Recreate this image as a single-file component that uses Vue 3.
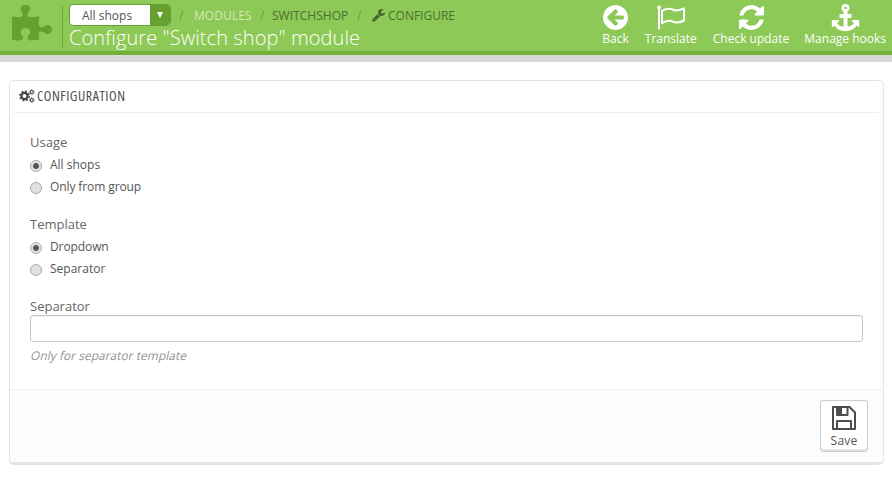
<script setup>
import { ref } from 'vue'

const usage = ref('all')
const template = ref('dropdown')
const separator = ref('')
const groups = [
  { label: 'Usage', name: 'usage', model: usage, options: [['all', 'All shops'], ['group', 'Only from group']] },
  { label: 'Template', name: 'template', model: template, options: [['dropdown', 'Dropdown'], ['separator', 'Separator']] }
]
</script>

<template>
  <div class="page">
    <header class="header">
      <svg class="puzzle" viewBox="128 0 1664 1664" preserveAspectRatio="none"><path d="M1755 1083q0 81-44.5 135t-123.5 54q-41 0-77.5-17.5t-59-38-56.5-38-71-17.5q-110 0-110 124 0 39 16 115t15 115v5q-22 0-33 1-34 3-97.5 11.5t-115.5 13.5-98 5q-61 0-103-26.5t-42-83.5q0-37 17.5-71t38-56.5 38-59 17.5-77.5q0-79-54-123.5t-135-44.5q-84 0-143 45.5t-59 127.5q0 43 15 83t33.5 64.5 33.5 53 15 50.5q0 45-46 89-37 35-117 35-95 0-245-24-9-2-27.5-4t-27.5-4l-13-2q-1 0-3-1-2 0-2-1v-1024q2 1 17.5 3.5t34 5 21.5 3.5q150 24 245 24 80 0 117-35 46-44 46-89 0-22-15-50.5t-33.5-53-33.5-64.5-15-83q0-82 59-127.5t144-45.5q80 0 134 44.5t54 123.5q0 41-17.5 77.5t-38 59-38 56.5-17.5 71q0 57 42 83.5t103 26.5q64 0 180-15t163-17v2q-1 2-3.5 17.5t-5 34-3.5 21.5q-24 150-24 245 0 80 35 117 44 46 89 46 22 0 50.5-15t53-33.5 64.5-33.5 83-15q82 0 127.5 59t45.5 143z" /></svg>
      <div class="heading">
        <nav class="crumbs">
          <button class="shop"><span class="shop-name">All shops</span><span class="caret"><svg viewBox="0 0 6 6"><path d="M0 0h6L3 6z" /></svg></span></button>
          <span class="slash s1">/</span>
          <span class="crumb muted">MODULES</span>
          <span class="slash s2">/</span>
          <span class="crumb c2">SWITCHSHOP</span>
          <span class="slash s3">/</span>
          <svg class="wrench" viewBox="64 128 1664 1664"><path d="M448 1472q0-26-19-45t-45-19-45 19-19 45 19 45 45 19 45-19 19-45zm644-420l-682 682q-37 37-90 37-52 0-91-37l-106-108q-38-36-38-90 0-53 38-91l681-681q39 98 114.5 173.5t173.5 114.5zm634-435q0 39-23 106-47 134-164.5 217.5t-258.5 83.5q-185 0-316.5-131.5t-131.5-316.5 131.5-316.5 316.5-131.5q58 0 121.5 16.5t107.5 46.5q16 11 16 28t-16 28l-293 169v224l193 107q5-3 79-48.5t135.5-81 70.5-35.5q15 0 23.5 10t8.5 25z" /></svg>
          <span class="crumb c3">CONFIGURE</span>
        </nav>
        <h1>Configure "Switch shop" module</h1>
      </div>
      <div class="tools">
        <a class="tool"><svg viewBox="128 128 1536 1536"><path d="M1408 960v-128q0-26-19-45t-45-19h-502l189-189q19-19 19-45t-19-45l-91-91q-18-18-45-18t-45 18l-362 362-91 91q-18 18-18 45t18 45l91 91 362 362q18 18 45 18t45-18l91-91q18-18 18-45t-18-45l-189-189h502q26 0 45-19t19-45zm256-64q0 209-103 385.5t-279.5 279.5-385.5 103-385.5-103-279.5-279.5-103-385.5 103-385.5 279.5-279.5 385.5-103 385.5 103 279.5 279.5 103 385.5z" /></svg><span>Back</span></a>
        <a class="tool"><svg class="flag" viewBox="0 0 28 24"><circle cx="2" cy="2" r="2" /><path d="M1 2h2v21.2q0 .8-1 .8t-1-.8z" /><path class="line" d="M5 5.3C9.5 2.6 13 2.5 17 4.5C20 6 23 4.5 27 2.8V15C22 17.6 19.5 18 16 16.2C12.5 14.4 9 15.4 5 17.7Z" /></svg><span>Translate</span></a>
        <a class="tool"><svg viewBox="128 128 1536 1536"><path d="M1639 1056q0 5-1 7-64 268-268 434.5t-478 166.5q-146 0-282.500-55t-243.500-157l-129 129q-19 19-45 19t-45-19-19-45v-448q0-26 19-45t45-19h448q26 0 45 19t19 45-19 45l-137 137q71 66 161 102t187 36q134 0 250-65t186-179q11-17 53-117 8-23 30-23h192q13 0 22.500 9.500t9.500 22.500zm25-800v448q0 26-19 45t-45 19h-448q-26 0-45-19t-19-45 19-45l138-138q-148-137-349-137-134 0-250 65t-186 179q-11 17-53 117-8 23-30 23h-199q-13 0-22.500-9.500t-9.500-22.500v-7q65-268 270-434.500t480-166.500q146 0 284 55.500t245 156.500l130-129q19-19 45-19t45 19 19 45z" /></svg><span>Check update</span></a>
        <a class="tool last"><svg class="anchor" viewBox="0 0 28 27"><path fill-rule="evenodd" d="M14 0a4 4 0 0 1 2 7.500V10h4v4h-4v8.800c3-.5 5.200-1.800 6.400-3.600l-2.100-2.100c-.4-.4-.1-1 .5-1h6.100c.5 0 .8.300.8.700v5.600c0 .7-.6.900-1 .5l-1.500-1.500C22.700 25.300 18.700 27 14 27S5.300 25.300 2.800 21.400l-1.500 1.500c-.4.4-1 .2-1-.5v-5.600c0-.4.3-.7.8-.7h6.100c.6 0 .9.600.5 1l-2.100 2.100C6.800 21 9 22.300 12 22.800V14H8v-4h4V7.500A4 4 0 0 1 14 0zm0 2.700a1.300 1.300 0 1 0 0 2.600 1.300 1.300 0 0 0 0-2.600z" /></svg><span>Manage hooks</span></a>
      </div>
    </header>
    <div class="strip"></div>
    <main class="panel">
      <h2>
        <svg class="cogs" viewBox="0 0 16 14"><g fill="none" stroke="#444"><circle cx="5.500" cy="7" r="3.100" stroke-width="2.200" /><circle cx="5.500" cy="7" r="4.700" stroke-width="1.500" stroke-dasharray="1.850 1.841" /><circle cx="12.800" cy="3" r="1.500" stroke-width="1.100" /><circle cx="12.800" cy="3" r="2.400" stroke-width=".8" stroke-dasharray=".94 .945" /><circle cx="12.800" cy="11" r="1.500" stroke-width="1.100" /><circle cx="12.800" cy="11" r="2.400" stroke-width=".8" stroke-dasharray=".94 .945" /></g></svg>
        <span class="title">CONFIGURATION</span>
      </h2>
      <form class="form" @submit.prevent>
        <div v-for="g in groups" :key="g.name" class="group">
          <div class="label">{{ g.label }}</div>
          <label v-for="[value, text] in g.options" :key="value" class="radio">
            <input v-model="g.model.value" type="radio" :name="g.name" :value="value" />
            <span :class="value">{{ text }}</span>
          </label>
        </div>
        <label class="label" for="separator">Separator</label>
        <input id="separator" v-model="separator" class="field" type="text" />
        <p class="help">Only for separator template</p>
      </form>
      <footer>
        <button class="save">
          <svg viewBox="0 0 24 24"><path fill="none" stroke="#4d4d4d" stroke-width="2" stroke-linejoin="round" d="M1 1h16.500L23 6.500V23H1zM5 23v-8h14v8M5 1v8h10.500V1" /><path fill="#4d4d4d" d="M5 1h5v8H5z" /></svg>
          <span>Save</span>
        </button>
      </footer>
    </main>
  </div>
</template>

<style>
body { background: #fff; }
</style>

<style scoped>
* { box-sizing: border-box; }
.page { height: 481px; overflow: hidden; font-family: "Open Sans", sans-serif; font-size: 12px; color: #555; }
button { font: inherit; color: inherit; padding: 0; }
.header { height: 55px; display: flex; align-items: flex-start; background: #8dc956; border-bottom: 4px solid #72b236; }
.puzzle { width: 41px; height: 38px; margin: 5px 0 0 12px; flex: none; fill: #66a031; }
.heading { margin: 6px 0 0 9px; padding-left: 6px; border-left: 1px solid #6da637; height: 42px; flex: 1; white-space: nowrap; }
.crumbs { display: flex; align-items: center; height: 20px; margin-top: -1px; font-size: 12px; line-height: 20px; color: #4a7030; }
.shop { display: flex; width: 102px; height: 22px; flex: none; border: 1px solid #66a031; border-radius: 4px; overflow: hidden; background: #fff; }
.shop-name { flex: 1; text-align: left; padding-left: 12px; line-height: 21px; color: #555; }
.caret { width: 20px; background: #66a031; display: flex; align-items: center; justify-content: center; }
.caret svg { width: 6px; height: 6px; fill: #fff; }
.slash { color: #68964a; flex: none; width: 6px; position: relative; top: 1px; }
.s1 { margin-left: 8px; }
.crumb { position: relative; top: 1px; }
.muted { color: #d0e8b8; margin-left: 9px; width: 58px; letter-spacing: .08px; }
.s2 { margin-left: 8px; }
.c2 { margin-left: 6px; width: 78px; letter-spacing: .03px; }
.s3 { margin-left: 7px; }
.wrench { width: 13px; height: 13px; fill: #41642a; margin-left: 9px; flex: none; }
.c3 { margin-left: 3px; }
h1 { margin: 1px 0 0; font-size: 20px; line-height: 24px; font-weight: 300; letter-spacing: .09px; color: #fff; }
.tools { display: flex; gap: 16px; padding: 5px 6px 0 0; color: #fff; flex: none; }
.tool { display: flex; flex-direction: column; align-items: center; line-height: 16px; white-space: nowrap; }
.last { margin-left: -1px; }
.tool span { margin-top: 1px; }
.tool svg { width: 25px; height: 25px; fill: #fff; }
.tool .flag { width: 28px; }
.tool .flag .line { fill: none; stroke: #fff; stroke-width: 2; stroke-linejoin: round; }
.tool .anchor { width: 29px; height: 27px; margin: -1px 0; }
.strip { height: 7px; background: #d8d8d8; }
.panel { width: 875px; height: 385px; margin: 18px 0 0 9px; border: 1px solid #e4e4e4; border-bottom-width: 3px; border-radius: 5px; overflow: hidden; display: flex; flex-direction: column; }
h2 { margin: 0 4px; height: 32px; flex: none; border-bottom: 1px solid #eee; display: flex; align-items: center; padding: 0 0 1px 5px; font-weight: 400; color: #505050; }
.cogs { width: 16px; height: 14px; flex: none; }
.title { margin-left: 2px; font-size: 14px; line-height: 28px; letter-spacing: .55px; font-stretch: 75%; }
.form { padding: 19px 20px 0; height: 276px; flex: none; }
.group { height: 82px; }
.label { display: block; height: 19px; line-height: 21px; font-size: 13px; color: #666; }
.group .label { height: 22px; line-height: 20px; }
.radio { display: flex; align-items: center; height: 22px; line-height: 22px; color: #555; }
.radio span { margin-left: 8px; }
.radio .group { height: auto; letter-spacing: -.1px; }
.radio .dropdown { letter-spacing: -.1px; }
.radio input { appearance: none; width: 12px; height: 12px; margin: 2px 0 0; border: 1px solid #aaa; border-radius: 50%; background: linear-gradient(#e2e2e2, #dedede); }
.radio input:checked { background: radial-gradient(circle, #555 0 2.500px, #e4e4e4 3.500px); }
.field { display: block; width: 833px; height: 27px; border: 1px solid #c7c7c7; border-radius: 3px; background: #fff; padding: 4px 8px; box-shadow: inset 0 1px 1px #eee; font: inherit; outline: 0; }
.help { margin: 5px 0 0 1px; line-height: 18px; transform: skewX(-13deg); color: #959595; }
footer { flex: 1; background: #fcfdfe; border-top: 1px solid #eee; padding: 10px 15px; display: flex; justify-content: flex-end; align-items: flex-start; }
.save { width: 48px; height: 52px; border: 1px solid #ccc; box-shadow: inset 0 -2px #e2e2e2; border-radius: 3px; background: #fff; display: flex; flex-direction: column; align-items: center; padding-top: 5px; }
.save svg { width: 24px; height: 24px; flex: none; }
.save span { line-height: 18px; margin-top: 2px; letter-spacing: .2px; }
</style>
